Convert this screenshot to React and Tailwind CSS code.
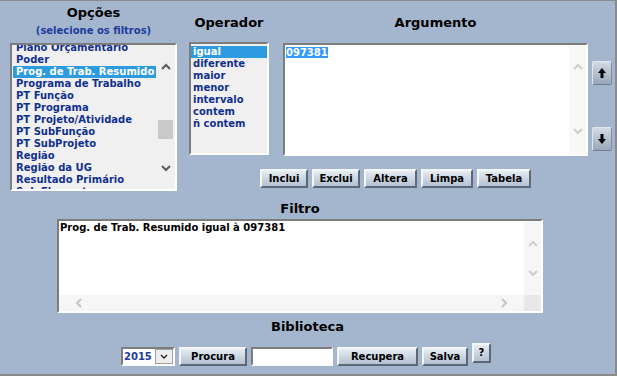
import React from "react";

const btn =
  "h-[19px] flex items-center justify-center border-2 border-t-[#f3f6f9] border-l-[#f3f6f9] border-r-[#5d6876] border-b-[#5d6876] bg-linear-to-b from-[#e6ecf2] to-[#b3c1d1] text-[10px] leading-[12px] font-bold text-black";

const inset =
  "border-2 border-t-[#7d7d7d] border-l-[#7d7d7d] border-r-white border-b-white";

function ChevUp({ color = "#5a5a5a" }) {
  return (
    <svg width="10" height="7" viewBox="0 0 10 7">
      <polyline points="1,6 5,2 9,6" fill="none" stroke={color} strokeWidth="2" />
    </svg>
  );
}
function ChevDown({ color = "#5a5a5a" }) {
  return (
    <svg width="10" height="7" viewBox="0 0 10 7">
      <polyline points="1,1 5,5 9,1" fill="none" stroke={color} strokeWidth="2" />
    </svg>
  );
}
function ChevLeft({ color = "#c4c4c4" }) {
  return (
    <svg width="7" height="10" viewBox="0 0 7 10">
      <polyline points="6,1 2,5 6,9" fill="none" stroke={color} strokeWidth="2" />
    </svg>
  );
}
function ChevRight({ color = "#c4c4c4" }) {
  return (
    <svg width="7" height="10" viewBox="0 0 7 10">
      <polyline points="1,1 5,5 1,9" fill="none" stroke={color} strokeWidth="2" />
    </svg>
  );
}

function ArrowBtn({ down }) {
  return (
    <div className="w-[20px] h-[24px] rounded-[2px] border border-t-[#dfe6ee] border-l-[#dfe6ee] border-r-[#7f8fa1] border-b-[#6f7f91] bg-linear-to-b from-[#d2dbe5] to-[#98a8ba] flex items-center justify-center">
      <svg width="8" height="10" viewBox="0 0 8 10" style={{ transform: down ? "rotate(180deg)" : "none" }}>
        <path d="M4 0 L8 5 H5.5 V10 H2.5 V5 H0 Z" fill="#000" />
      </svg>
    </div>
  );
}

const options = [
  "Plano Orçamentario",
  "Poder",
  "Prog. de Trab. Resumido",
  "Programa de Trabalho",
  "PT Função",
  "PT Programa",
  "PT Projeto/Atividade",
  "PT SubFunção",
  "PT SubProjeto",
  "Região",
  "Região da UG",
  "Resultado Primário",
  "Sub Elemento",
];

const operators = ["igual", "diferente", "maior", "menor", "intervalo", "contem", "ñ contem"];

export default function App() {
  return (
    <div className="w-[617px] h-[376px] overflow-hidden bg-[#a3b6cd] border-t border-r-2 border-b-2 border-[#8a8a8a] font-['DejaVu_Sans',sans-serif] text-[10px] font-bold text-black">
      {/* Top section */}
      <div className="flex pl-[10px]">
        {/* Opções */}
        <div className="w-[167px] flex flex-col items-center">
          <div className="mt-[4px] text-[13px] leading-[16px]">Opções</div>
          <div className="mt-[4px] leading-[12px] text-[#1d3c9c]">(selecione os filtros)</div>
          <div className={`mt-[6px] w-[167px] h-[148px] ${inset} bg-[#f0f0f0] flex overflow-hidden`}>
            <div className="w-[144px] pl-[1px] overflow-hidden">
              <div className="-mt-[3px]">
                {options.map((o, i) => (
                  <div
                    key={o}
                    className={`h-[12px] leading-[12px] pl-[3px] whitespace-nowrap ${
                      i === 2 ? "bg-[#2e9be0] text-white" : "text-[#10308f]"
                    }`}
                  >
                    {o}
                  </div>
                ))}
              </div>
            </div>
            <div className="flex-1 flex flex-col items-center">
              <div className="mt-[18px] flex"><ChevUp /></div>
              <div className="mt-[50px] w-[15px] h-[19px] bg-[#c9c9c9]" />
              <div className="mt-[26px] flex"><ChevDown /></div>
            </div>
          </div>
        </div>

        {/* Right block */}
        <div className="ml-[12px] flex flex-col">
          <div className="flex">
            {/* Operador */}
            <div className="w-[80px] flex flex-col items-center">
              <div className="mt-[14px] text-[13px] leading-[16px]">Operador</div>
              <div className={`mt-[11px] w-[80px] h-[113px] ${inset} bg-[#f0f0f0] pt-[2px]`}>
                {operators.map((o, i) => (
                  <div
                    key={o}
                    className={`h-[12px] leading-[12px] pl-[2px] whitespace-nowrap ${
                      i === 0 ? "bg-[#2e9be0] text-white" : "text-[#10308f]"
                    }`}
                  >
                    {o}
                  </div>
                ))}
              </div>
            </div>

            {/* Argumento */}
            <div className="ml-[14px] w-[305px] flex flex-col items-center">
              <div className="mt-[14px] text-[13px] leading-[16px]">Argumento</div>
              <div className={`mt-[12px] w-[305px] h-[113px] ${inset} bg-white flex`}>
                <div className="flex-1 pt-[2px] pl-[1px] leading-[11px]">
                  <span className="bg-[#3399ff] text-white">097381</span>
                </div>
                <div className="w-[17px] bg-[#f8f8f8] flex flex-col items-center">
                  <div className="mt-[18px] flex"><ChevUp color="#cdcdcd" /></div>
                  <div className="mt-[58px] flex"><ChevDown color="#cdcdcd" /></div>
                </div>
              </div>
            </div>

            {/* Arrows */}
            <div className="ml-[4px] flex flex-col">
              <div className="mt-[60px]"><ArrowBtn /></div>
              <div className="mt-[42px]"><ArrowBtn down /></div>
            </div>
          </div>

          {/* Buttons row */}
          <div className="mt-[13px] ml-[71px] flex gap-[4px]">
            <button className={`${btn} w-[48px]`}>Inclui</button>
            <button className={`${btn} w-[48px]`}>Exclui</button>
            <button className={`${btn} w-[53px]`}>Altera</button>
            <button className={`${btn} w-[52px]`}>Limpa</button>
            <button className={`${btn} w-[54px]`}>Tabela</button>
          </div>
        </div>
      </div>

      {/* Filtro */}
      <div className="ml-[57px] w-[486px] flex flex-col items-center">
        <div className="mt-[10px] text-[13px] leading-[16px]">Filtro</div>
        <div className={`mt-[2px] w-[486px] h-[94px] ${inset} bg-white flex flex-col`}>
          <div className="flex-1 flex">
            <div className="flex-1 pt-[1px] pl-[1px] leading-[12px]">Prog. de Trab. Resumido igual à 097381</div>
            <div className="w-[17px] bg-[#f6f6f6] flex flex-col items-center">
              <div className="mt-[19px] flex"><ChevUp color="#cdcdcd" /></div>
              <div className="mt-[23px] flex"><ChevDown color="#cdcdcd" /></div>
            </div>
          </div>
          <div className="h-[16px] flex">
            <div className="flex-1 bg-[#f6f6f6] flex items-center justify-between px-[16px]">
              <ChevLeft />
              <ChevRight />
            </div>
            <div className="w-[17px] bg-[#e8e8e8]" />
          </div>
        </div>
      </div>

      {/* Biblioteca */}
      <div className="mt-[6px] text-center text-[13px] leading-[16px]">Biblioteca</div>
      <div className="mt-[8px] pl-[121px] flex items-start gap-[4px]">
        <div className={`mt-[4px] w-[54px] h-[19px] ${inset} bg-white flex`}>
          <div className="flex-1 pl-[1px] leading-[15px] text-[#1d3c9c]">2015</div>
          <div className="w-[18px] border border-[#a0a0a0] bg-[#eeeeee] flex items-center justify-center">
            <svg width="8" height="5" viewBox="0 0 8 5">
              <polyline points="1,1 4,4 7,1" fill="none" stroke="#222" strokeWidth="1.4" />
            </svg>
          </div>
        </div>
        <button className={`${btn} mt-[4px] w-[68px]`}>Procura</button>
        <div className={`mt-[4px] w-[82px] h-[19px] ${inset} bg-white`} />
        <button className={`${btn} mt-[4px] w-[81px]`}>Recupera</button>
        <button className={`${btn} mt-[4px] w-[46px]`}>Salva</button>
        <button className={`${btn} w-[19px] h-[20px]`}>?</button>
      </div>
    </div>
  );
}
